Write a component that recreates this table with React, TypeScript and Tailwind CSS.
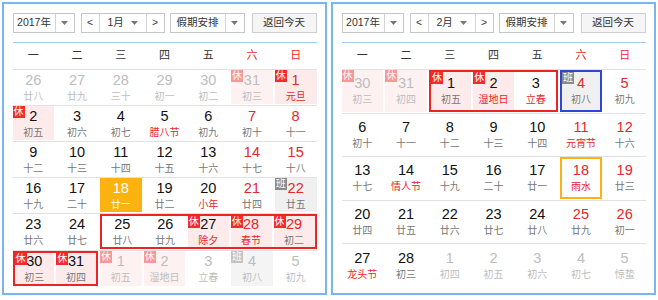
import React from 'react';

type Cell = {
  d: number;
  l: string;
  o?: boolean;
  rn?: boolean;
  rl?: boolean;
  b?: '休' | '班';
  bg?: 'pink' | 'gray' | 'today';
  f?: 'orange' | 'blue';
};
type Group = { g: Cell[] };
type Item = Cell | Group;

const jan: Item[][] = [
  [
    { d: 26, l: '廿八', o: true },
    { d: 27, l: '廿九', o: true },
    { d: 28, l: '三十', o: true },
    { d: 29, l: '初一', o: true },
    { d: 30, l: '初二', o: true },
    { d: 31, l: '初三', o: true, b: '休', bg: 'pink' },
    { d: 1, l: '元旦', rn: true, rl: true, b: '休', bg: 'pink' },
  ],
  [
    { d: 2, l: '初五', b: '休', bg: 'pink' },
    { d: 3, l: '初六' },
    { d: 4, l: '初七' },
    { d: 5, l: '腊八节', rl: true },
    { d: 6, l: '初九' },
    { d: 7, l: '初十', rn: true },
    { d: 8, l: '十一', rn: true },
  ],
  [
    { d: 9, l: '十二' },
    { d: 10, l: '十三' },
    { d: 11, l: '十四' },
    { d: 12, l: '十五' },
    { d: 13, l: '十六' },
    { d: 14, l: '十七', rn: true },
    { d: 15, l: '十八', rn: true },
  ],
  [
    { d: 16, l: '十九' },
    { d: 17, l: '二十' },
    { d: 18, l: '廿一', bg: 'today' },
    { d: 19, l: '廿二' },
    { d: 20, l: '小年', rl: true },
    { d: 21, l: '廿四', rn: true },
    { d: 22, l: '廿五', rn: true, b: '班', bg: 'gray' },
  ],
  [
    { d: 23, l: '廿六' },
    { d: 24, l: '廿七' },
    {
      g: [
        { d: 25, l: '廿八' },
        { d: 26, l: '廿九' },
        { d: 27, l: '除夕', rl: true, b: '休', bg: 'pink' },
        { d: 28, l: '春节', rn: true, rl: true, b: '休', bg: 'pink' },
        { d: 29, l: '初二', rn: true, b: '休', bg: 'pink' },
      ],
    },
  ],
  [
    {
      g: [
        { d: 30, l: '初三', b: '休', bg: 'pink' },
        { d: 31, l: '初四', b: '休', bg: 'pink' },
      ],
    },
    { d: 1, l: '初五', o: true, b: '休', bg: 'pink' },
    { d: 2, l: '湿地日', o: true, b: '休', bg: 'pink' },
    { d: 3, l: '立春', o: true },
    { d: 4, l: '初八', o: true, b: '班', bg: 'gray' },
    { d: 5, l: '初九', o: true },
  ],
];

const feb: Item[][] = [
  [
    { d: 30, l: '初三', o: true, b: '休', bg: 'pink' },
    { d: 31, l: '初四', o: true, b: '休', bg: 'pink' },
    {
      g: [
        { d: 1, l: '初五', b: '休', bg: 'pink' },
        { d: 2, l: '湿地日', rl: true, b: '休', bg: 'pink' },
        { d: 3, l: '立春', rl: true },
      ],
    },
    { d: 4, l: '初八', rn: true, b: '班', bg: 'gray', f: 'blue' },
    { d: 5, l: '初九', rn: true },
  ],
  [
    { d: 6, l: '初十' },
    { d: 7, l: '十一' },
    { d: 8, l: '十二' },
    { d: 9, l: '十三' },
    { d: 10, l: '十四' },
    { d: 11, l: '元宵节', rn: true, rl: true },
    { d: 12, l: '十六', rn: true },
  ],
  [
    { d: 13, l: '十七' },
    { d: 14, l: '情人节', rl: true },
    { d: 15, l: '十九' },
    { d: 16, l: '二十' },
    { d: 17, l: '廿一' },
    { d: 18, l: '雨水', rn: true, rl: true, f: 'orange' },
    { d: 19, l: '廿三', rn: true },
  ],
  [
    { d: 20, l: '廿四' },
    { d: 21, l: '廿五' },
    { d: 22, l: '廿六' },
    { d: 23, l: '廿七' },
    { d: 24, l: '廿八' },
    { d: 25, l: '廿九', rn: true },
    { d: 26, l: '初一', rn: true },
  ],
  [
    { d: 27, l: '龙头节', rl: true },
    { d: 28, l: '初三' },
    { d: 1, l: '初四', o: true },
    { d: 2, l: '初五', o: true },
    { d: 3, l: '初六', o: true },
    { d: 4, l: '初七', o: true },
    { d: 5, l: '惊蛰', o: true },
  ],
];

const spanCls: Record<number, string> = {
  2: 'col-span-2 grid-cols-2',
  3: 'col-span-3 grid-cols-3',
  5: 'col-span-5 grid-cols-5',
};

function Tri() {
  return (
    <svg width="7" height="4" viewBox="0 0 7 4" className="block">
      <polygon points="0,0 7,0 3.5,4" fill="#777" />
    </svg>
  );
}

function DayCell({ c }: { c: Cell }) {
  let bg = '';
  if (c.bg === 'pink') bg = c.o ? 'bg-[#fdf1f1]' : 'bg-[#fdeaea]';
  else if (c.bg === 'gray') bg = c.o ? 'bg-[#f4f4f4]' : 'bg-[#f0f0f0]';
  else if (c.bg === 'today') bg = 'bg-[#fcb30f]';

  let numCol = 'text-[#111]';
  let lunCol = 'text-[#777]';
  if (c.o) {
    numCol = 'text-[#bdbdbd]';
    lunCol = 'text-[#bdbdbd]';
  } else if (c.bg === 'today') {
    numCol = 'text-white';
    lunCol = 'text-white';
  } else {
    if (c.rn) numCol = 'text-[#e8262b]';
    if (c.rl) lunCol = 'text-[#e8262b]';
  }

  let frame = '';
  if (c.f === 'orange') frame = 'border-2 border-[#fbb216]';
  if (c.f === 'blue') frame = 'border-2 border-[#2a48d2]';

  const badgeBg = c.b === '休' ? 'bg-[#f42b2b]' : 'bg-[#8a8a8a]';

  return (
    <div className={`relative h-full flex flex-col items-center justify-center ${bg} ${frame}`}>
      {c.b && (
        <span
          className={`absolute top-0 left-0 w-[12px] h-[12px] flex items-center justify-center text-[10px] leading-none text-white ${badgeBg} ${c.o ? 'opacity-45' : ''}`}
        >
          {c.b}
        </span>
      )}
      <span className={`text-[14.5px] leading-[16px] ${numCol}`}>{c.d}</span>
      <span className={`mt-[2px] text-[10px] leading-[13px] whitespace-nowrap ${lunCol}`}>{c.l}</span>
    </div>
  );
}

function Calendar({ month, rows }: { month: string; rows: Item[][] }) {
  const weekdays = ['一', '二', '三', '四', '五', '六', '日'];
  return (
    <div className="w-[325px] h-[293px] border-2 border-[#78b5f1] bg-white pt-[9px] pb-[6px] px-[8.5px] flex flex-col">
      <div className="flex h-[20px] text-[10.5px] text-[#333]">
        <div className="w-[62px] h-full flex border border-[#c6c6c6] bg-white">
          <div className="flex-1 flex items-center justify-center">2017年</div>
          <div className="w-[19px] border-l border-[#d4d4d4] flex items-center justify-center">
            <Tri />
          </div>
        </div>
        <div className="ml-[6px] w-[84px] h-full flex border border-[#c6c6c6] bg-white">
          <div className="w-[18px] border-r border-[#d4d4d4] flex items-center justify-center text-[#444]">&lt;</div>
          <div className="flex-1 flex items-center justify-between px-[8px]">
            <span>{month}</span>
            <Tri />
          </div>
          <div className="w-[18px] border-l border-[#d4d4d4] flex items-center justify-center text-[#444]">&gt;</div>
        </div>
        <div className="ml-[5px] w-[75px] h-full flex border border-[#c6c6c6] bg-white">
          <div className="flex-1 flex items-center justify-center">假期安排</div>
          <div className="w-[19px] border-l border-[#d4d4d4] flex items-center justify-center">
            <Tri />
          </div>
        </div>
        <div className="ml-[7px] w-[65px] h-full border border-[#cfcfcf] bg-[#f5f5f5] flex items-center justify-center">
          返回今天
        </div>
      </div>
      <div className="mt-[9px] border-t border-[#9fcbf3]" />
      <div className="grid grid-cols-7 gap-x-[2px] h-[26px] pb-[2px] text-[11px]">
        {weekdays.map((w, i) => (
          <div key={w} className={`flex items-center justify-center ${i >= 5 ? 'text-[#e8262b]' : 'text-[#333]'}`}>
            {w}
          </div>
        ))}
      </div>
      <div className="flex-1 flex flex-col">
        {rows.map((row, ri) => (
          <div key={ri} className="flex-1 border-t border-[#e1e1e1] grid grid-cols-7 gap-x-[2px] pb-px">
            {row.map((it, ci) =>
              'g' in it ? (
                <div
                  key={ci}
                  className={`grid gap-x-[2px] border-2 border-[#ee2424] ${spanCls[it.g.length]}`}
                >
                  {it.g.map((c, k) => (
                    <DayCell key={k} c={c} />
                  ))}
                </div>
              ) : (
                <DayCell key={ci} c={it} />
              )
            )}
          </div>
        ))}
      </div>
    </div>
  );
}

export default function App() {
  return (
    <div className="w-[658px] h-[300px] bg-white pl-[2px] pt-[2px] flex gap-[4px] font-['Liberation_Sans','Noto_Sans_CJK_SC',sans-serif]">
      <Calendar month="1月" rows={jan} />
      <Calendar month="2月" rows={feb} />
    </div>
  );
}
